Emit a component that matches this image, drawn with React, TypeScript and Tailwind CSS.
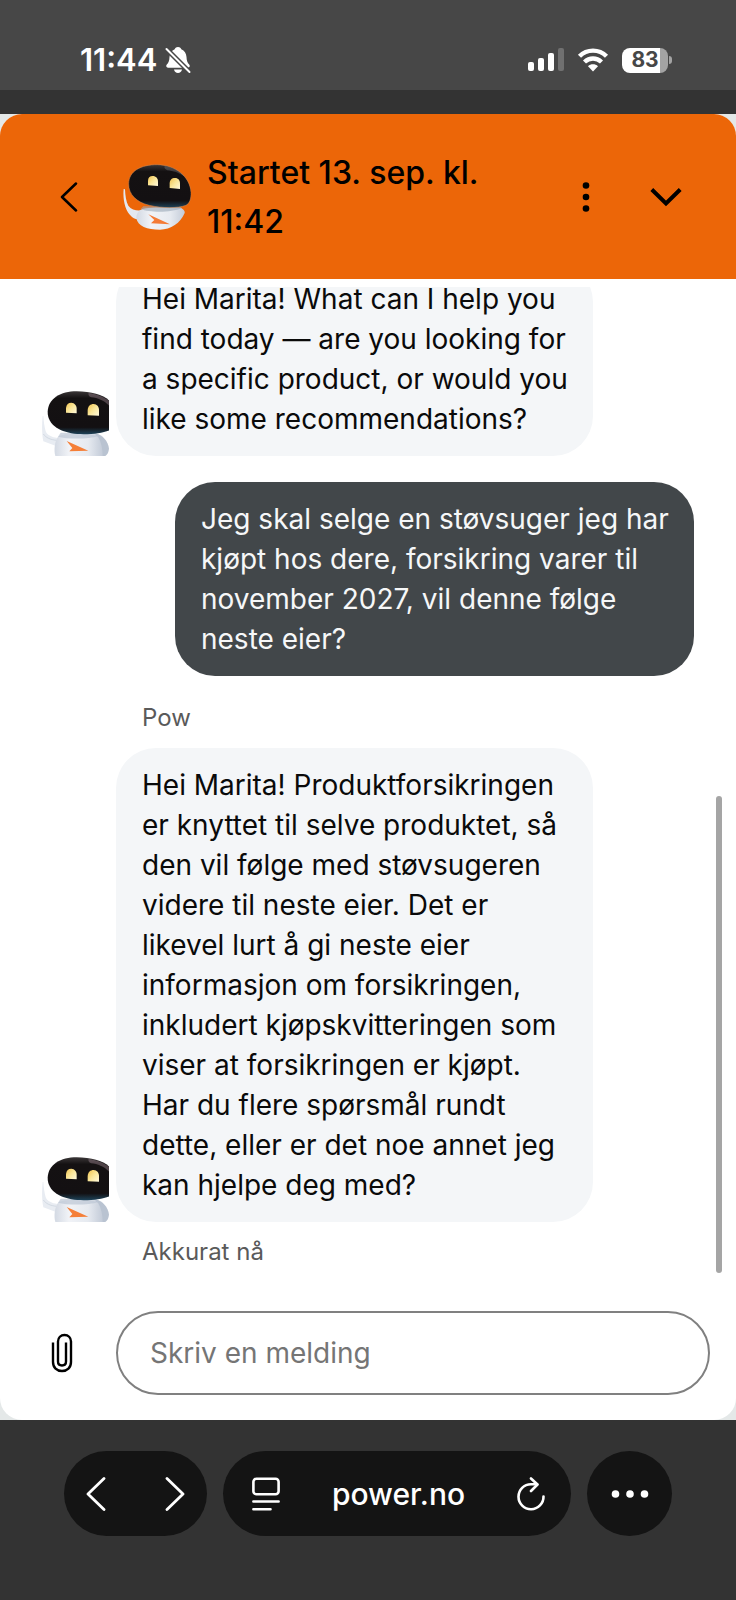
import { useState } from "react";

type Message = {
    id: number;
    from: "bot" | "user";
    text: string;
    author?: string;
    time?: string;
};

const messages: Message[] = [
    {
        id: 1,
        from: "bot",
        text: "Hei Marita! What can I help you find today — are you looking for a specific product, or would you like some recommendations?",
    },
    {
        id: 2,
        from: "user",
        text: "Jeg skal selge en støvsuger jeg har kjøpt hos dere, forsikring varer til november 2027, vil denne følge neste eier?",
    },
    {
        id: 3,
        from: "bot",
        author: "Pow",
        time: "Akkurat nå",
        text: "Hei Marita! Produktforsikringen er knyttet til selve produktet, så den vil følge med støvsugeren videre til neste eier. Det er likevel lurt å gi neste eier informasjon om forsikringen, inkludert kjøpskvitteringen som viser at forsikringen er kjøpt. Har du flere spørsmål rundt dette, eller er det noe annet jeg kan hjelpe deg med?",
    },
];

function RobotGradients({ id }: { id: string }) {
    return (
        <defs>
            <linearGradient id={`${id}-head`} x1="0.5" y1="0" x2="0.5" y2="1">
                <stop offset="0" stopColor="#3a3637" />
                <stop offset="0.16" stopColor="#141112" />
                <stop offset="0.84" stopColor="#131012" />
                <stop offset="1" stopColor="#1d4258" />
            </linearGradient>
            <linearGradient id={`${id}-body`} x1="0" y1="0" x2="1" y2="0">
                <stop offset="0" stopColor="#d3d9e3" />
                <stop offset="0.3" stopColor="#f1f3f7" />
                <stop offset="0.7" stopColor="#e6eaf0" />
                <stop offset="1" stopColor="#c3cbd8" />
            </linearGradient>
            <linearGradient id={`${id}-eye`} x1="0" y1="0" x2="1" y2="1">
                <stop offset="0" stopColor="#f0c24e" />
                <stop offset="0.5" stopColor="#fbe79a" />
                <stop offset="1" stopColor="#fff9dc" />
            </linearGradient>
        </defs>
    );
}

function HeaderRobot() {
    return (
        <svg viewBox="39 45 204 198" className="h-[66px] w-[68px] shrink-0" aria-hidden="true">
            <RobotGradients id="hr" />
            <path d="M41 120 C38 150 44 186 66 204 C74 210 84 213 94 212 L94 184 C80 186 64 182 55 170 C48 158 46 140 45 121 Z" fill="#e4e8ef" />
            <path d="M90 184 C104 174 150 176 212 176 C220 180 226 187 224 192 C212 222 182 242 150 242 C112 242 82 232 79 206 C79 197 83 189 90 184 Z" fill="url(#hr-body)" />
            <path d="M92 180 C118 191 182 192 216 177 L206 172 L100 172 Z" fill="#9aa8b8" opacity="0.6" />
            <path d="M56 104 C57 66 92 47 142 47 C196 48 240 82 243 130 C244 150 238 164 228 169 C204 178 156 178 118 169 C80 160 55 136 56 104 Z" fill="url(#hr-head)" stroke="#c98a5c" strokeWidth="1.5" />
            <path d="M164 51 C190 55 210 66 224 84 C206 70 190 66 172 64 C164 60 162 56 164 51 Z" fill="#8b8a90" opacity="0.35" />
            <path d="M114 109 V96 C114 86 119 81 128 81 C138 81 144 88 144 98 V111 Z" fill="url(#hr-eye)" />
            <path d="M179 117 V104 C179 93 185 87 195 87 C205 87 210 94 210 104 V120 Z" fill="url(#hr-eye)" />
            <path d="M115 196 L180 226 L123 223 L133 213 Z" fill="#f47b36" />
        </svg>
    );
}

function ChatRobot({ id }: { id: string }) {
    return (
        <svg viewBox="36 30 201 198" className="h-[66px] w-[67px] shrink-0" aria-hidden="true">
            <RobotGradients id={id} />
            <path d="M38 108 C35 138 36 168 40 184 L78 198 L82 174 C66 172 52 166 47 154 C43 140 41 122 40 108 Z" fill="#e8ecf2" />
            <path d="M40 162 C48 173 60 179 80 181" fill="none" stroke="#c6ceda" strokeWidth="2" />
            <path d="M196 160 C218 164 234 184 237 206 C236 216 232 224 226 228 H204 Z" fill="#b9c3d1" />
            <path d="M84 170 C96 158 188 158 204 170 C214 186 218 208 218 228 H76 C71 210 74 184 84 170 Z" fill={`url(#${id}-body)`} />
            <path d="M84 170 C112 178 176 178 206 168 L196 158 H92 Z" fill="#bcc6d4" opacity="0.7" />
            <path d="M53 96 C54 56 92 34 140 34 C186 34 222 46 240 64 V150 C220 160 180 164 142 162 C92 158 53 136 53 96 Z" fill={`url(#${id}-head)`} />
            <path d="M176 39 C204 43 226 52 240 66 V80 C224 62 204 54 184 52 C176 48 174 44 176 39 Z" fill="#a58d98" opacity="0.4" />
            <path d="M108 98 V84 C109 73 115 68 124 68 C134 69 140 76 140 86 V100 Z" fill={`url(#${id}-eye)`} />
            <path d="M173 106 V90 C174 78 181 72 191 72 C201 73 207 80 207 90 V107 Z" fill={`url(#${id}-eye)`} />
            <path d="M110 183 L175 212 L118 214 L127 204 Z" fill="#f57f38" />
        </svg>
    );
}

function StatusBar() {
    return (
        <div className="flex h-[90px] shrink-0 items-start justify-between bg-[#474747] pt-[42px] pr-[64px] pl-[80px] text-white">
            <div className="flex h-9 items-center gap-2">
                <span className="text-[31px] leading-9 font-semibold">11:44</span>
                <svg viewBox="0 0 26 28" className="h-7 w-[26px]" aria-hidden="true">
                    <path d="M13 1 C15 1 16 2.200 16.300 3.300 C19.500 4.600 21.300 7.500 21.500 11 C21.600 15 22.500 16.800 24.200 18.600 C25.300 20 24.800 21.700 23 21.700 H3 C1.200 21.700 0.700 20 1.800 18.600 C3.500 16.800 4.400 15 4.500 11 C4.700 7.500 6.500 4.600 9.700 3.300 C10 2.200 11 1 13 1 Z M9 23.600 H17 C16.600 25.800 15 27 13 27 C11 27 9.400 25.800 9 23.600 Z" fill="#fff" />
                    <path d="M1.500 3 L24.500 26" stroke="#474747" strokeWidth="5" />
                    <path d="M1.500 3 L24.500 26" stroke="#fff" strokeWidth="2" strokeLinecap="round" />
                </svg>
            </div>
            <div className="flex h-9 items-center gap-[13px]">
                <svg viewBox="0 0 36 24" className="h-6 w-9" aria-hidden="true">
                    <rect x="0" y="14" width="6" height="9" rx="2" fill="#fff" />
                    <rect x="10" y="10" width="6" height="13" rx="2" fill="#fff" />
                    <rect x="20" y="5" width="6" height="18" rx="2" fill="#fff" />
                    <rect x="30" y="0" width="6" height="23" rx="2" fill="#707070" />
                </svg>
                <svg viewBox="0 0 32 24" className="h-6 w-8" aria-hidden="true">
                    <path d="M2.500 8.200 C10 0.700 22 0.700 29.500 8.200" fill="none" stroke="#fff" strokeWidth="4.400" />
                    <path d="M7.500 14 C12.500 9.300 19.500 9.300 24.500 14" fill="none" stroke="#fff" strokeWidth="4.400" />
                    <path d="M16 23.500 L11 18.300 C13.800 15.700 18.200 15.700 21 18.300 Z" fill="#fff" />
                </svg>
                <div className="flex items-center gap-px">
                    <div className="flex h-[25px] w-[46px] items-center justify-center rounded-lg bg-linear-to-r from-white from-83% to-[#a3a3a3] to-83% text-[21px] leading-6 font-bold text-[#474747]">
                        83
                    </div>
                    <span className="h-2 w-[3px] rounded-r-full bg-[#a3a3a3]" />
                </div>
            </div>
        </div>
    );
}

function ChatHeader() {
    return (
        <header className="flex h-[165px] shrink-0 items-center bg-[#ec6608] pr-[46px] pl-[54px]">
            <button type="button" aria-label="Tilbake" className="mr-[39px] flex h-12 w-[30px] items-center justify-center">
                <svg viewBox="0 0 18 30" className="h-[30px] w-[18px]" aria-hidden="true">
                    <path d="M16 1.500 L2 15 L16 28.500" fill="none" stroke="#000" strokeWidth="2.500" strokeLinecap="round" strokeLinejoin="round" />
                </svg>
            </button>
            <HeaderRobot />
            <h1 className="mr-auto ml-4 max-w-[300px] text-[32px] leading-[49px] font-medium text-black">Startet 13. sep. kl. 11:42</h1>
            <button type="button" aria-label="Flere valg" className="flex size-12 items-center justify-center">
                <svg viewBox="0 0 8 30" className="h-[30px] w-2" aria-hidden="true">
                    <circle cx="4" cy="3.500" r="3.300" />
                    <circle cx="4" cy="15" r="3.300" />
                    <circle cx="4" cy="26.500" r="3.300" />
                </svg>
            </button>
            <button type="button" aria-label="Minimer" className="ml-8 flex size-12 items-center justify-center">
                <svg viewBox="0 0 32 20" className="h-5 w-8" aria-hidden="true">
                    <path d="M1.800 2.500 L16 16.500 L30.200 2.500" fill="none" stroke="#000" strokeWidth="4" />
                </svg>
            </button>
        </header>
    );
}

function BotMessage({ message }: { message: Message }) {
    return (
        <div>
            {message.author && <p className="mb-3.5 ml-[100px] text-2xl leading-8 text-[#5a5a5a]">{message.author}</p>}
            <div className="flex items-end gap-[7px]">
                <ChatRobot id={`robot-${message.id}`} />
                <p className="max-w-[477px] rounded-[40px] bg-[#f4f6f8] py-[17px] pr-5 pl-[26px] text-[28px] leading-10 text-[#0a0a0a]">
                    {message.text}
                </p>
            </div>
            {message.time && <p className="mt-3.5 ml-[100px] text-2xl leading-8 text-[#5a5a5a]">{message.time}</p>}
        </div>
    );
}

function UserMessage({ message }: { message: Message }) {
    return (
        <p className="max-w-[519px] self-end rounded-[40px] bg-[#42474a] py-[17px] pr-5 pl-[26px] text-[28px] leading-10 text-[#f6f7f8]">
            {message.text}
        </p>
    );
}

function Composer() {
    const [draft, setDraft] = useState("");

    return (
        <form className="flex shrink-0 items-center pt-6 pr-[26px] pb-[25px] pl-[38px]" onSubmit={(e) => e.preventDefault()}>
            <button type="button" aria-label="Legg ved fil" className="mr-[30px] flex size-12 items-center justify-center">
                <svg viewBox="0 0 22 40" className="h-10 w-[22px]" aria-hidden="true">
                    <path
                        d="M2 9.500 V29 C2 34.500 5.800 38 11 38 C16.200 38 20 34.500 20 29 V8.500 C20 4.500 17.200 2 13.500 2 C9.800 2 7 4.500 7 8.500 V28.500 C7 31 8.800 32.500 11 32.500 C13.200 32.500 15 31 15 28.500 V9.500"
                        fill="none"
                        stroke="#000"
                        strokeWidth="2.400"
                    />
                </svg>
            </button>
            <input
                type="text"
                aria-label="Skriv en melding"
                placeholder="Skriv en melding"
                value={draft}
                onChange={(e) => setDraft(e.target.value)}
                className="h-[84px] min-w-0 flex-1 rounded-full border-2 border-[#808080] bg-white px-8 text-[28px] text-black outline-none placeholder:text-[#757575]"
            />
        </form>
    );
}

function BrowserBar() {
    return (
        <nav className="flex h-[180px] shrink-0 items-start gap-4 bg-[#333333] px-16 pt-[31px] text-white">
            <div className="flex h-[85px] w-[143px] items-center justify-between rounded-full bg-[#141414] px-[14px]">
                <button type="button" aria-label="Forrige side" className="flex h-12 w-9 items-center justify-center">
                    <svg viewBox="0 0 20 34" className="h-[34px] w-5" aria-hidden="true">
                        <path d="M18 1.500 L2 17 L18 32.500" fill="none" stroke="#fff" strokeWidth="2.800" strokeLinecap="round" strokeLinejoin="round" />
                    </svg>
                </button>
                <button type="button" aria-label="Neste side" className="flex h-12 w-9 items-center justify-center">
                    <svg viewBox="0 0 20 34" className="h-[34px] w-5" aria-hidden="true">
                        <path d="M2 1.500 L18 17 L2 32.500" fill="none" stroke="#fff" strokeWidth="2.800" strokeLinecap="round" strokeLinejoin="round" />
                    </svg>
                </button>
            </div>
            <div className="flex h-[85px] flex-1 items-center justify-between rounded-full bg-[#141414] pr-[22px] pl-[25px]">
                <button type="button" aria-label="Sideinnstillinger" className="flex h-12 w-9 items-center justify-center">
                    <svg viewBox="0 0 28 34" className="h-[34px] w-7" fill="none" stroke="#fff" strokeWidth="2.600" strokeLinecap="round" aria-hidden="true">
                        <rect x="1.400" y="1.800" width="25.200" height="15.400" rx="3" />
                        <path d="M1.400 24.500 H26.600 M1.400 32.300 H18.500" />
                    </svg>
                </button>
                <span className="text-[30px] leading-9 font-medium">power.no</span>
                <button type="button" aria-label="Last inn på nytt" className="flex h-12 w-9 items-center justify-center">
                    <svg viewBox="0 0 28 34" className="h-[34px] w-7" fill="none" stroke="#fff" strokeWidth="2.600" strokeLinecap="round" strokeLinejoin="round" aria-hidden="true">
                        <path d="M26.500 19.500 A12.500 12.500 0 1 1 14 7.200 H20" />
                        <path d="M14 1.500 L20.500 7.500 L14 14" />
                    </svg>
                </button>
            </div>
            <button type="button" aria-label="Mer" className="flex size-[85px] items-center justify-center rounded-full bg-[#141414]">
                <svg viewBox="0 0 38 8" className="h-2 w-[38px]" fill="#fff" aria-hidden="true">
                    <circle cx="4.500" cy="4" r="3.800" />
                    <circle cx="19" cy="4" r="3.800" />
                    <circle cx="33.500" cy="4" r="3.800" />
                </svg>
            </button>
        </nav>
    );
}

export default function App() {
    return (
        <div className="flex h-screen flex-col bg-[#333333] font-['Inter',sans-serif]">
            <StatusBar />
            <div className="h-6 shrink-0" />

            <div className="flex min-h-0 flex-1 flex-col bg-[#e4e8e8]">
                <main className="flex min-h-0 flex-1 flex-col overflow-hidden rounded-[22px] bg-white">
                    <ChatHeader />
                    <div className="relative mt-2 flex min-h-0 flex-1 flex-col justify-end overflow-hidden">
                        <div className="flex flex-col gap-[26px] px-[42px] pb-[19px]">
                            {messages.map((message) =>
                                message.from === "bot" ? (
                                    <BotMessage key={message.id} message={message} />
                                ) : (
                                    <UserMessage key={message.id} message={message} />
                                )
                            )}
                        </div>
                        {/* Scroll thumb */}
                        <div className="absolute right-[14px] bottom-[14px] h-[477px] w-1.5 rounded-full bg-[#a5a5a5]" />
                    </div>
                    <Composer />
                </main>
            </div>

            <BrowserBar />
        </div>
    );
}
